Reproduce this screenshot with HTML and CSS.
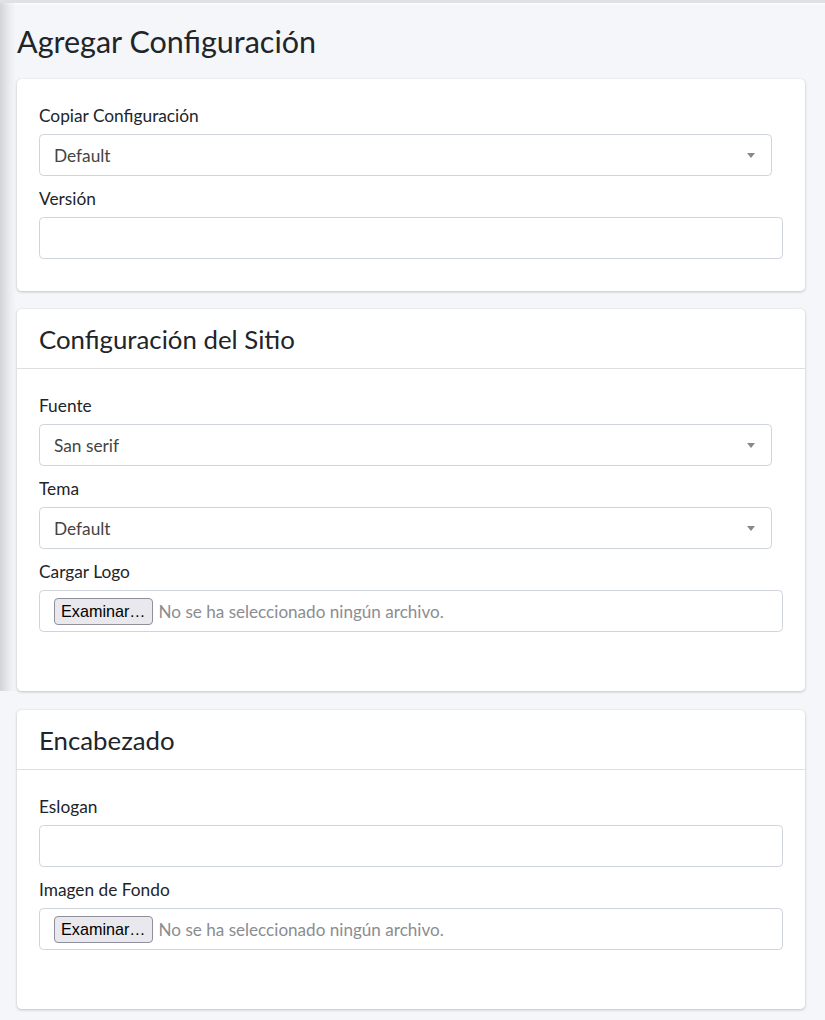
FILE: index.html
```html
<!DOCTYPE html>
<html lang="es">
<head>
<meta charset="utf-8">
<title>Agregar Configuración</title>
<link rel="stylesheet" href="styles.css">
</head>
<body>
<div class="side-shadow"></div>
<main class="content">
  <h1 class="page-title">Agregar Configuración</h1>

  <section class="card">
    <div class="card-body">
      <div class="form-group">
        <label class="label">Copiar Configuración</label>
        <div class="select"><span class="select-text">Default</span><span class="select-arrow"></span></div>
      </div>
      <div class="form-group">
        <label class="label">Versión</label>
        <div class="input"></div>
      </div>
    </div>
  </section>

  <section class="card">
    <div class="card-header"><h3 class="card-title">Configuración del Sitio</h3></div>
    <div class="card-body">
      <div class="form-group">
        <label class="label">Fuente</label>
        <div class="select"><span class="select-text">San serif</span><span class="select-arrow"></span></div>
      </div>
      <div class="form-group">
        <label class="label">Tema</label>
        <div class="select"><span class="select-text">Default</span><span class="select-arrow"></span></div>
      </div>
      <div class="form-group file-group">
        <label class="label">Cargar Logo</label>
        <div class="input file-input"><span class="file-btn">Examinar…</span><span class="file-text">No se ha seleccionado ningún archivo.</span></div>
      </div>
    </div>
  </section>

  <section class="card">
    <div class="card-header"><h3 class="card-title">Encabezado</h3></div>
    <div class="card-body">
      <div class="form-group">
        <label class="label">Eslogan</label>
        <div class="input"></div>
      </div>
      <div class="form-group file-group">
        <label class="label">Imagen de Fondo</label>
        <div class="input file-input"><span class="file-btn">Examinar…</span><span class="file-text">No se ha seleccionado ningún archivo.</span></div>
      </div>
    </div>
  </section>
</main>
</body>
</html>
```

FILE: styles.css
```css
* { box-sizing: border-box; }

html, body {
  margin: 0;
  padding: 0;
}

body {
  background: #f4f6f9;
  font-family: "Lato", "Liberation Sans", sans-serif;
  color: #212529;
  border-top: 3px solid #dee2e6;
  box-shadow: inset 0 2px 0 #fafafa;
  position: relative;
  min-height: 1020px;
}

.side-shadow {
  position: absolute;
  left: 0;
  top: 0;
  width: 16px;
  height: 688px;
  background: linear-gradient(to right, rgba(0,0,0,0.14), rgba(0,0,0,0.04) 60%, rgba(0,0,0,0));
}

.content {
  padding: 0 20px 0 17px;
}

.page-title {
  margin: 19px 0 19px;
  font-size: 30.5px;
  font-weight: 400;
  line-height: 38px;
  color: #212529;
}

.card {
  background: #fff;
  border-radius: 4.4px;
  box-shadow: 0 0 1px rgba(0,0,0,0.125), 0 1px 3px rgba(0,0,0,0.2);
  margin-bottom: 18px;
}

.card + .card + .card {
  margin-top: 19px;
}

.card-header {
  height: 60px;
  border-bottom: 1px solid rgba(0,0,0,0.125);
  padding: 0 22px;
  display: flex;
  align-items: center;
}

.card-title {
  margin: 0;
  font-size: 25.8px;
  font-weight: 400;
  line-height: 30px;
  color: #212529;
}

.card-body {
  padding: 24px 22px 22px;
}

.form-group {
  margin-bottom: 10px;
}

.file-group {
  margin-bottom: 37px;
}

.label {
  display: block;
  font-size: 17.3px;
  line-height: 26px;
  margin-bottom: 5px;
  color: #212529;
}

.input,
.select {
  height: 42px;
  border: 1px solid #ced4da;
  border-radius: 4.4px;
  background: #fff;
}

.select {
  width: calc(100% - 11px);
  display: flex;
  align-items: center;
  justify-content: space-between;
  padding: 0 14px 0 14px;
}

.select-text {
  font-size: 17.3px;
  color: #444;
}

.select-arrow {
  width: 0;
  height: 0;
  border-style: solid;
  border-width: 5px 4px 0 4px;
  border-color: #888 transparent transparent transparent;
  margin-right: 2px;
}

.file-input {
  display: flex;
  align-items: center;
  padding-left: 14px;
}

.file-btn {
  font-family: "Liberation Sans", Arial, sans-serif;
  font-size: 16.2px;
  color: #000;
  background: #e9e9ed;
  border: 1px solid #8f8f9d;
  border-radius: 4px;
  height: 27px;
  line-height: 25px;
  padding: 0 6px;
}

.file-text {
  margin-left: 6px;
  font-size: 17.1px;
  color: #8a8d91;
}
```
